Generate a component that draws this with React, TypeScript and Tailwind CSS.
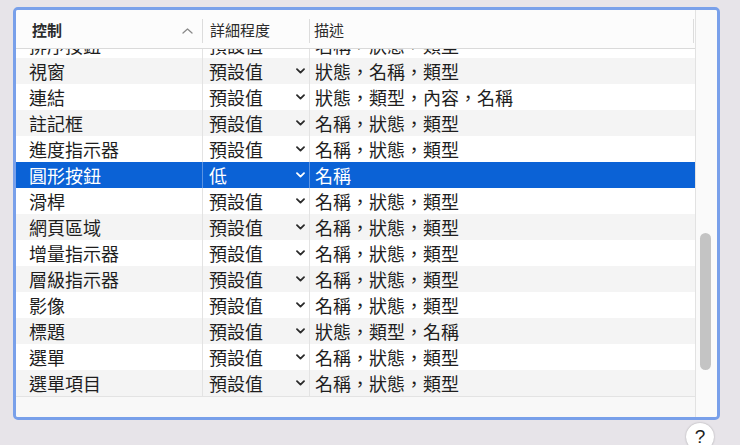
import React from 'react';

const rows: [string, string, string][] = [
  ['排序按鈕', '預設值', '名稱，狀態，類型'],
  ['視窗', '預設值', '狀態，名稱，類型'],
  ['連結', '預設值', '狀態，類型，內容，名稱'],
  ['註記框', '預設值', '名稱，狀態，類型'],
  ['進度指示器', '預設值', '名稱，狀態，類型'],
  ['圓形按鈕', '低', '名稱'],
  ['滑桿', '預設值', '名稱，狀態，類型'],
  ['網頁區域', '預設值', '名稱，狀態，類型'],
  ['增量指示器', '預設值', '名稱，狀態，類型'],
  ['層級指示器', '預設值', '名稱，狀態，類型'],
  ['影像', '預設值', '名稱，狀態，類型'],
  ['標題', '預設值', '狀態，類型，名稱'],
  ['選單', '預設值', '名稱，狀態，類型'],
  ['選單項目', '預設值', '名稱，狀態，類型'],
];

const SELECTED = 5;

const ChevronDown = ({ white }: { white: boolean }) => (
  <svg width="9" height="6" viewBox="0 0 9 6" className="shrink-0">
    <path
      d="M1 1.2 L4.5 4.6 L8 1.2"
      fill="none"
      stroke={white ? '#ffffff' : '#2a2a2a'}
      strokeWidth="1.8"
      strokeLinecap="round"
      strokeLinejoin="round"
    />
  </svg>
);

const Row = ({ row, index }: { row: [string, string, string]; index: number }) => {
  const selected = index === SELECTED;
  const bg = selected ? 'bg-[#0b62d6] text-white' : index % 2 === 1 ? 'bg-[#f4f4f4] text-[#1e1e1e]' : 'bg-white text-[#1e1e1e]';
  const line = selected ? 'border-[#5b93e2]' : 'border-[#e3e3e3]';
  return (
    <div className={`flex h-[26px] items-center text-[18px] leading-[26px] ${bg}`}>
      <div className={`w-[187px] h-full pl-[13px] border-r ${line} whitespace-nowrap`}>{row[0]}</div>
      <div className={`w-[107px] h-full pl-[6px] pr-[4px] flex items-center justify-between border-r ${line}`}>
        <span>{row[1]}</span>
        <ChevronDown white={selected} />
      </div>
      <div className="flex-1 h-full pl-[5px] whitespace-nowrap">{row[2]}</div>
    </div>
  );
};

const App = () => {
  return (
    <div className="w-[740px] h-[445px] overflow-hidden bg-[#e7e4e9] pt-[7px] pl-[13px] flex flex-col font-['Noto_Sans_CJK_TC','Noto_Sans',sans-serif]">
      <div className="shrink-0 w-[707px] h-[413px] border-[3px] border-[#79a0ea] rounded-[5px] bg-[#fafafa] overflow-hidden flex">
        <div className="w-[680px] h-full flex flex-col border-r border-[#e2e2e2]">
          <div className="h-[39px] shrink-0 flex items-center border-b border-[#dadada] bg-[#fcfcfc] pt-[3px] text-[15px] text-[#2b2b2b]">
            <div className="w-[186px] pl-[16px] pr-[9px] flex items-center justify-between">
              <span className="font-semibold">控制</span>
              <svg width="11" height="6" viewBox="0 0 11 6">
                <path d="M1 5 L5.5 1 L10 5" fill="none" stroke="#8a8a8a" strokeWidth="1.3" strokeLinecap="round" strokeLinejoin="round" />
              </svg>
            </div>
            <div className="w-px h-[24px] bg-[#dcdcdc]" />
            <div className="w-[106px] pl-[7px]">詳細程度</div>
            <div className="w-px h-[24px] bg-[#dcdcdc]" />
            <div className="flex-1 pl-[4px]">描述</div>
            <div className="w-px h-[24px] bg-[#dcdcdc] mr-[1px]" />
          </div>
          <div className="flex-1 overflow-hidden bg-[#f8f8f8]">
            <div className="-mt-[17px] border-b border-[#e3e3e3]">
              {rows.map((r, i) => (
                <Row key={r[0]} row={r} index={i} />
              ))}
            </div>
          </div>
        </div>
        <div className="flex-1 h-full bg-[#fafafa] pl-[4px] pt-[223px]">
          <div className="w-[11px] h-[137px] rounded-full bg-[#c4c4c4]" />
        </div>
      </div>
      <div className="shrink-0 ml-[673px] mt-[3px] w-[28px] h-[28px] rounded-full bg-white shadow-[0_0_2px_rgba(0,0,0,0.3)] flex items-center justify-center text-[19px] text-[#222] font-['Liberation_Sans',sans-serif]">
        ?
      </div>
    </div>
  );
};

export default App;
